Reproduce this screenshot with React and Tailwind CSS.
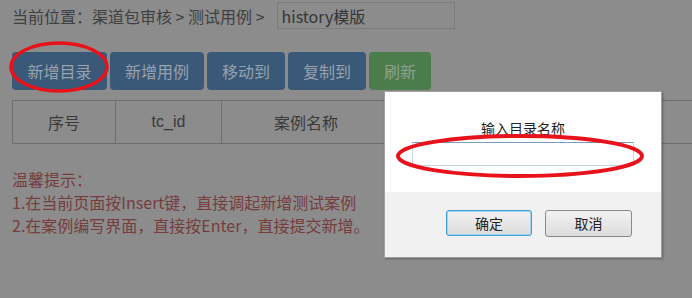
export default function App() {
  const font = { fontFamily: '"Microsoft YaHei", "Noto Sans CJK SC", "Liberation Sans", sans-serif' };
  return (
    <div className="relative w-[692px] h-[298px] overflow-hidden bg-[#8c8c8c]" style={font}>
      {/* breadcrumb */}
      <div className="flex items-center pl-3 pt-[2px] h-[29px] text-[16px] text-[#404040]">
        <span className="whitespace-pre">当前位置：渠道包审核 &gt; 测试用例 &gt;</span>
        <div className="ml-[12px] w-[178px] h-[27px] border border-[#7c7c7c] flex items-center pl-[4px] text-[#353535]">history模版</div>
      </div>
      {/* buttons */}
      <div className="flex gap-[3px] pl-3 mt-[23px]">
        <div className="h-[38px] w-[95px] rounded-[4px] bg-[#3a5878] text-[#97a2ad] text-[16px] flex items-center justify-center">新增目录</div>
        <div className="h-[38px] w-[94px] rounded-[4px] bg-[#3a5878] text-[#97a2ad] text-[16px] flex items-center justify-center">新增用例</div>
        <div className="h-[38px] w-[78px] rounded-[4px] bg-[#3a5878] text-[#97a2ad] text-[16px] flex items-center justify-center">移动到</div>
        <div className="h-[38px] w-[78px] rounded-[4px] bg-[#3a5878] text-[#97a2ad] text-[16px] flex items-center justify-center">复制到</div>
        <div className="h-[38px] w-[62px] rounded-[4px] bg-[#4b7d4c] text-[#8fa08f] text-[16px] flex items-center justify-center">刷新</div>
      </div>
      {/* table */}
      <div className="ml-3 mt-[10px] w-[760px] h-[44px] border border-[#6e6e6e] flex text-[16px] text-[#3a3a3a]">
        <div className="w-[103px] border-r border-[#6e6e6e] flex items-center justify-center">序号</div>
        <div className="w-[106px] border-r border-[#6e6e6e] flex items-center justify-center" style={{ fontFamily: '"Liberation Sans", sans-serif' }}>tc_id</div>
        <div className="w-[168px] flex items-center justify-center">案例名称</div>
      </div>
      {/* tips */}
      <div className="pl-3 mt-[24px] text-[16px] leading-[23px] text-[#763d3d]">
        <div>温馨提示：</div>
        <div>1.在当前页面按Insert键，直接调起新增测试案例</div>
        <div>2.在案例编写界面，直接按Enter，直接提交新增。</div>
      </div>

      {/* dialog */}
      <div className="absolute left-[384px] top-[91px] w-[278px] h-[167px] border border-[#a0a0a0] shadow-[1px_1px_2px_rgba(0,0,0,0.3)] flex flex-col">
        <div className="h-[100px] bg-white flex flex-col items-center">
          <div className="mt-[27px] text-[14px] leading-[18px] text-[#222]">输入目录名称</div>
          <div className="mt-[5px] w-[222px] h-[24px] border border-[#c6d6e6] border-t-[#7a9bbd] bg-white" />
        </div>
        <div className="flex-1 bg-[#f1f1f1] flex justify-end items-start pt-[18px] pr-[29px] gap-[13px]">
          <div className="w-[86px] h-[26px] rounded-[3px] border border-[#3e9ed6] bg-gradient-to-b from-[#f2f2f2] to-[#dcdcdc] text-[14px] text-[#222] flex items-center justify-center shadow-[inset_0_0_0_1px_#9fd4f0]">确定</div>
          <div className="w-[87px] h-[27px] rounded-[3px] border border-[#8a8a8a] bg-gradient-to-b from-[#f2f2f2] to-[#dcdcdc] text-[14px] text-[#222] flex items-center justify-center">取消</div>
        </div>
      </div>

      {/* annotations */}
      <svg className="absolute left-0 top-0 pointer-events-none" width="692" height="298">
        <ellipse cx="59" cy="67" rx="48" ry="24" fill="none" stroke="#e8121a" strokeWidth="3.5" />
        <ellipse cx="520" cy="156" rx="122" ry="20" fill="none" stroke="#e8121a" strokeWidth="4" />
      </svg>
    </div>
  );
}
